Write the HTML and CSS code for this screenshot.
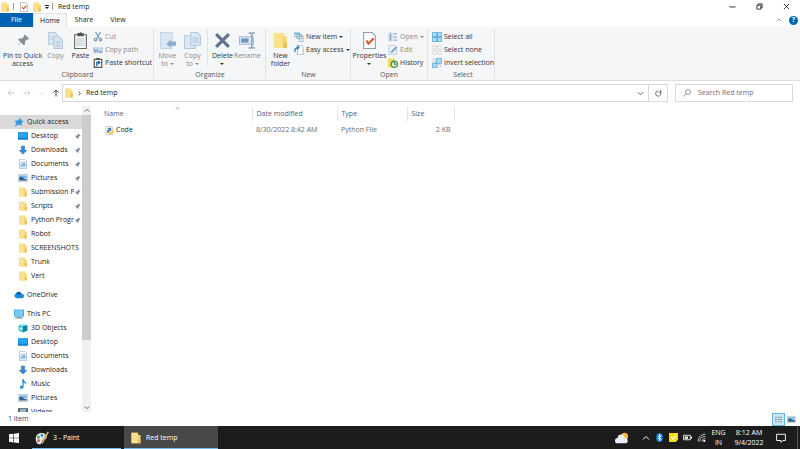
FILE: index.html
```
<!DOCTYPE html>
<html lang="en">
<head>
    <meta charset="UTF-8">
    <meta name="viewport" content="width=device-width, initial-scale=1.0">
    <title>Red temp</title>
    <link rel="stylesheet" href="styles.css">
</head>
<body>
    <!-- shared icons -->
    <svg class="sprite" aria-hidden="true">
        <symbol id="folder" viewBox="0 0 16 16"><path fill="#f3d573" d="M2 1h9v3h3v11H2z"/><path fill="#fbe18f" d="M2 1h8v14H2z"/><path fill="#e8bd50" d="M11 10h3v5h-3z"/></symbol>
        <symbol id="pin" viewBox="0 0 16 16"><path fill="currentColor" d="M10 1l5 5-1 1-1-.5L10 9.500l.5 2.500L9 13.500 6 10.500 1 15l4.500-5-3-3L4 5.500l2.500.5L9.500 3 9 2z"/></symbol>
        <symbol id="star" viewBox="0 0 16 16"><path fill="#3595dc" d="M10 1l1 4.500 4.500.5-3.500 3.500 1 5-4.500-2.500L1 15l3-5-3-4 5-.500z"/></symbol>
        <symbol id="desktop" viewBox="0 0 16 16"><path fill="#0b7fd6" d="M0 2h16v12H0z"/><path fill="#27a4f5" d="M1 3h14v8H1z"/></symbol>
        <symbol id="down" viewBox="0 0 16 16"><path fill="#3b86d0" d="M5 1h6v7h4l-7 7-7-7h4z"/></symbol>
        <symbol id="document" viewBox="0 0 16 16"><path fill="#fff" stroke="#8aa3b5" d="M2.500.5h8l3 3v12h-11z"/><path stroke="#3d94d0" d="M4 5.500h3m1 0h4M4 8.500h8M4 10.500h4m1 0h3M4 12.500h8"/><path fill="#3d94d0" d="M8 7h3v3H8z"/></symbol>
        <symbol id="picture" viewBox="0 0 16 16"><path fill="#f4f8fb" stroke="#9baab5" d="M.5 2.500h15v11H.5z"/><path fill="#6cb5e8" d="M2 4h12v4H2z"/><path fill="#315f86" d="M2 7l4-1 4 3h4v3H2z"/></symbol>
        <symbol id="cloud" viewBox="0 0 16 16"><path fill="#1689dc" d="M4 13a4 4 0 0 1-1-7.500A5 5 0 0 1 12 6a3.500 3.500 0 0 1 1 7z"/><path fill="#075da8" d="M3 6a5 5 0 0 1 9 0l-3 2z"/></symbol>
        <symbol id="pc" viewBox="0 0 16 16"><path fill="#2397df" d="M0 1h16v11H0z"/><path fill="#76ccf7" d="M1 2h14v9H1z"/><path fill="#8094a3" d="M6 12h4v1h4v2H2v-2h4z"/></symbol>
        <symbol id="cube" viewBox="0 0 16 16"><path fill="#8be5f2" d="M1 3l8-2 6 2-7 2z"/><path fill="#2fbed5" d="M1 3l7 2v10l-7-3z"/><path fill="#0786a4" d="M8 5l7-2v9l-7 3z"/><path fill="#d9f8fc" d="M3 7h4v4H3z"/></symbol>
        <symbol id="music" viewBox="0 0 16 16"><path fill="#168fdc" d="M7 0h2c0 4 5 4 4 9-1-2-2-3-4-3v6c0 5-6 4-6 1 0-2 2-3 4-2z"/></symbol>
        <symbol id="video" viewBox="0 0 16 16"><path fill="#444" d="M0 2h16v12H0z"/><path fill="#8fb5c8" d="M3 3h10v10H3z"/><path stroke="#ddd" stroke-dasharray="1 1" d="M1.500 3v10m13-10v10"/></symbol>
        <symbol id="pages" viewBox="0 0 16 16"><g fill="#dce8f4" stroke="#b3c9e0"><path d="M1.500.5h6l2 2v9h-8z"/><path d="M6.500 4.500h5l3 3v8h-8z"/></g><path stroke="#b4cae0" d="M3 4.500h4M3 6.500h3M8 9.500h5m-5 2h5m-5 2h5"/></symbol>
        <symbol id="pages-up" viewBox="0 0 16 16"><g fill="#dce8f4" stroke="#b3c9e0"><path d="M.5 3.500h10v12H.5z"/><path d="M6.500.5h6l3 3v9h-9z"/></g><path stroke="#b4cae0" d="M8 5.500h6m-6 2h6m-6 2h6"/></symbol>
        <symbol id="check" viewBox="0 0 16 16"><path fill="#fff" stroke="#8f9ba5" d="M2.500.5h8l3 3v12h-11z"/><path fill="none" stroke="#d85b32" stroke-width="2" d="M5 8l2 3 5-5"/></symbol>
        <symbol id="chevron-up" viewBox="0 0 16 16"><path fill="none" stroke="currentColor" stroke-width="2" d="M2 11l6-6 6 6"/></symbol>
        <symbol id="chevron-down" viewBox="0 0 16 16"><path fill="none" stroke="currentColor" stroke-width="2" d="M2 5l6 6 6-6"/></symbol>
        <symbol id="details" viewBox="0 0 16 16"><path stroke="#758b99" stroke-width="2" d="M2 4h3m2 0h3m1 0h3M2 8h3m2 0h3m1 0h3M2 12h3m2 0h3m1 0h3"/></symbol>
    </svg>

    <header class="titlebar">
        <svg class="icon"><use href="#folder"/></svg>
        <span class="line"></span>
        <button aria-label="Properties"><svg class="icon"><use href="#check"/></svg></button>
        <button aria-label="New folder"><svg class="icon"><use href="#folder"/></svg></button>
        <button class="customize" aria-label="Customize"><i class="caret"></i></button>
        <span class="line"></span>
        <h1>Red temp</h1>
        <div class="window-buttons">
            <button aria-label="Minimize"><svg viewBox="0 0 16 16"><path stroke="#222" stroke-width="2" d="M1 9h14"/></svg></button>
            <button aria-label="Restore"><svg viewBox="0 0 16 16"><path fill="none" stroke="#222" stroke-width="2" d="M2 5h9v9H2zM5 5V2h9v9h-3"/></svg></button>
            <button aria-label="Close"><svg viewBox="0 0 16 16"><path stroke="#222" stroke-width="2" d="M2 2l12 12M14 2L2 14"/></svg></button>
        </div>
    </header>

    <nav class="tabs">
        <button class="tab file">File</button>
        <button class="tab active">Home</button>
        <button class="tab">Share</button>
        <button class="tab">View</button>
        <div class="help">
            <button aria-label="Collapse ribbon"><svg><use href="#chevron-up"/></svg></button>
            <button class="question" aria-label="Help">?</button>
        </div>
    </nav>

    <div class="ribbon">
        <section class="group clipboard">
            <div class="tools">
                <button class="big wide"><svg class="pin"><use href="#pin"/></svg><span>Pin to Quick<br>access</span></button>
                <button class="big disabled"><svg><use href="#pages"/></svg><span>Copy</span></button>
                <button class="big"><svg viewBox="0 0 16 16"><path fill="#f8fafb" stroke="#6f6256" d="M2.500 2.500h11v13h-11z"/><path fill="#555" d="M5 1h2l1-1 1 1h2v3H5z"/><path stroke="#b5c6d0" d="M4 6.500h8m-8 2h8m-8 2h8m-8 2h8"/></svg><span>Paste</span></button>
                <div class="small-list">
                    <button class="disabled"><svg viewBox="0 0 16 16"><g fill="none" stroke="#7d9cc5" stroke-width="2"><path d="M4 0l6 10M12 0L6 10"/><circle cx="4" cy="12" r="2"/><circle cx="12" cy="12" r="2"/></g></svg>Cut</button>
                    <button class="disabled"><svg viewBox="0 0 16 16"><path fill="#cbdcee" stroke="#a6bdd8" d="M.5 4.500h15v8H.5z"/><path stroke="#6f91bd" stroke-width="2" d="M2 7l2 4m2-4l2 4m2 0h4"/></svg>Copy path</button>
                    <button><svg viewBox="0 0 16 16"><path fill="#fff" stroke="#66584c" stroke-width="2" d="M2 2h12v13H2z"/><path fill="#555" d="M5 0h6v3H5z"/><path fill="none" stroke="#1d67aa" stroke-width="2" d="M6 13V7h5M8 5l3 2-3 3"/></svg>Paste shortcut</button>
                </div>
            </div>
            <h2>Clipboard</h2>
        </section>
        <section class="group organize">
            <div class="tools">
                <button class="big disabled"><svg viewBox="0 0 16 16"><path fill="#dbe6f3" stroke="#c4d4e6" d="M1.500.5h11v15h-11z"/><path fill="#8eabd0" d="M7 11l4-4v2h5v4h-5v2z"/></svg><span>Move<br>to <i class="caret"></i></span></button>
                <button class="big disabled"><svg><use href="#pages-up"/></svg><span>Copy<br>to <i class="caret"></i></span></button>
                <span class="separator"></span>
                <button class="big"><svg viewBox="0 0 16 16"><path stroke="#60748f" stroke-width="3" d="M2 2l12 12M14 2L2 14"/></svg><span>Delete<br><i class="caret"></i></span></button>
                <button class="big disabled"><svg viewBox="0 0 16 16"><path fill="#e3edf7" stroke="#a1b8d2" d="M.5 4.500h13v7H.5z"/><path fill="#6f96c1" d="M2 6h7v4H2z"/><path fill="none" stroke="#8da5bd" stroke-width="1.500" d="M9 1h2l1 1 1-1h2m-3 1v12m-3 1h2l1-1 1 1h2"/></svg><span>Rename</span></button>
            </div>
            <h2>Organize</h2>
        </section>
        <section class="group new">
            <div class="tools">
                <button class="big"><svg><use href="#folder"/></svg><span>New<br>folder</span></button>
                <div class="small-list">
                    <button><svg viewBox="0 0 16 16"><g fill="#eef6fb" stroke="#7197ad"><path d="M.5 1.500h9v6h-9zM4.500 4.500h8v6h-8zM8.500 6.500h6v9h-6z"/></g><path fill="#55a6d8" d="M1 2h8v2H1z"/></svg>New item <i class="caret"></i></button>
                    <button><svg viewBox="0 0 16 16"><path fill="#fff" stroke="#8494a0" d="M5.500.5h6l3 3v12h-9z"/><path fill="none" stroke="#2583c0" stroke-width="2" d="M2 11C0 7 3 4 7 4M5 1l3 3-3 3"/></svg>Easy access <i class="caret"></i></button>
                </div>
            </div>
            <h2>New</h2>
        </section>
        <section class="group open">
            <div class="tools">
                <button class="big"><svg><use href="#check"/></svg><span>Properties<br><i class="caret"></i></span></button>
                <div class="small-list">
                    <button class="disabled"><svg viewBox="0 0 16 16"><path fill="#dce8f4" stroke="#a7bfdb" d="M1.500 1.500h5v13h-5z"/><path stroke="#86a3c8" stroke-width="2" d="M9 3h5m-5 5h5m-5 5h5M4 3v10"/></svg>Open <i class="caret"></i></button>
                    <button class="disabled"><svg viewBox="0 0 16 16"><path fill="#edf4fa" stroke="#9bb8d5" d="M1.500.5h9l3 3v12h-12z"/><path stroke="#75a3cf" stroke-width="3" d="M5 12l9-9"/></svg>Edit</button>
                    <button><svg viewBox="0 0 16 16"><path fill="#f4d95e" d="M0 1h11v14H0z"/><circle cx="10" cy="10" r="5" fill="#e7f4dc" stroke="#3e8d46" stroke-width="2"/><path fill="none" stroke="#315f86" stroke-width="1.500" d="M10 6v4h3"/></svg>History</button>
                </div>
            </div>
            <h2>Open</h2>
        </section>
        <section class="group select">
            <div class="tools">
                <div class="small-list">
                    <button><svg viewBox="0 0 16 16"><g fill="#a9dcf8" stroke="#3095d0"><path d="M.5.5h7v7h-7zM8.500.5h7v7h-7zM.5 8.500h7v7h-7zM8.500 8.500h7v7h-7z"/></g></svg>Select all</button>
                    <button><svg viewBox="0 0 16 16"><g fill="#fff" stroke="#a9afb4" stroke-dasharray="2 1"><path d="M1.500 1.500h5v5h-5zM9.500 1.500h5v5h-5zM1.500 9.500h5v5h-5zM9.500 9.500h5v5h-5z"/></g></svg>Select none</button>
                    <button><svg viewBox="0 0 16 16"><g fill="#a9dcf8" stroke="#3095d0"><path d="M6.500.5h9v8h-9zM.5 8.500h7v7h-7z"/></g><g fill="#fff" stroke="#a9bdc9"><path d="M1.500 1.500h4v5h-4zM9.500 10.500h4v4h-4z"/></g></svg>Invert selection</button>
                </div>
            </div>
            <h2>Select</h2>
        </section>
    </div>

    <div class="address-row">
        <div class="arrows">
            <button class="off" aria-label="Back"><svg viewBox="0 0 16 16"><path fill="none" stroke="currentColor" stroke-width="2" d="M15 8H2m5-5L2 8l5 5"/></svg></button>
            <button class="off" aria-label="Forward"><svg viewBox="0 0 16 16"><path fill="none" stroke="currentColor" stroke-width="2" d="M1 8h13M9 3l5 5-5 5"/></svg></button>
            <button class="off recent" aria-label="Recent locations"><svg><use href="#chevron-down"/></svg></button>
            <button aria-label="Up"><svg viewBox="0 0 16 16"><path fill="none" stroke="currentColor" stroke-width="2" d="M8 15V2M3 7l5-5 5 5"/></svg></button>
        </div>
        <div class="address">
            <svg class="icon"><use href="#folder"/></svg>
            <svg class="crumb" viewBox="0 0 16 16"><path fill="none" stroke="#444" stroke-width="3" d="M5 2l6 6-6 6"/></svg>
            <span class="path">Red temp</span>
            <button aria-label="Previous locations"><svg><use href="#chevron-down"/></svg></button>
            <button class="refresh" aria-label="Refresh"><svg viewBox="0 0 16 16"><path fill="none" stroke="currentColor" stroke-width="2" d="M12 4a6 6 0 1 1-5-2M8 5h5V0"/></svg></button>
        </div>
        <label class="search">
            <svg viewBox="0 0 16 16"><g fill="none" stroke="#777" stroke-width="1.500"><circle cx="10" cy="6" r="5"/><path d="M6 10l-5 5"/></g></svg>
            <input type="text" placeholder="Search Red temp" aria-label="Search Red temp">
        </label>
    </div>

    <main>
        <aside>
            <ul class="tree">
                <li class="root current"><svg><use href="#star"/></svg><span>Quick access</span></li>
                <li><svg><use href="#desktop"/></svg><span>Desktop</span><svg class="pinned"><use href="#pin"/></svg></li>
                <li><svg><use href="#down"/></svg><span>Downloads</span><svg class="pinned"><use href="#pin"/></svg></li>
                <li><svg><use href="#document"/></svg><span>Documents</span><svg class="pinned"><use href="#pin"/></svg></li>
                <li><svg><use href="#picture"/></svg><span>Pictures</span><svg class="pinned"><use href="#pin"/></svg></li>
                <li><svg><use href="#folder"/></svg><span>Submission P</span><svg class="pinned"><use href="#pin"/></svg></li>
                <li><svg><use href="#folder"/></svg><span>Scripts</span><svg class="pinned"><use href="#pin"/></svg></li>
                <li><svg><use href="#folder"/></svg><span>Python Progr</span><svg class="pinned"><use href="#pin"/></svg></li>
                <li><svg><use href="#folder"/></svg><span>Robot</span></li>
                <li><svg><use href="#folder"/></svg><span>SCREENSHOTS</span></li>
                <li><svg><use href="#folder"/></svg><span>Trunk</span></li>
                <li><svg><use href="#folder"/></svg><span>Vert</span></li>
                <li class="root spaced"><svg><use href="#cloud"/></svg><span>OneDrive</span></li>
                <li class="root spaced"><svg><use href="#pc"/></svg><span>This PC</span></li>
                <li><svg><use href="#cube"/></svg><span>3D Objects</span></li>
                <li><svg><use href="#desktop"/></svg><span>Desktop</span></li>
                <li><svg><use href="#document"/></svg><span>Documents</span></li>
                <li><svg><use href="#down"/></svg><span>Downloads</span></li>
                <li><svg><use href="#music"/></svg><span>Music</span></li>
                <li><svg><use href="#picture"/></svg><span>Pictures</span></li>
                <li><svg><use href="#video"/></svg><span>Videos</span></li>
            </ul>
            <div class="scrollbar">
                <svg><use href="#chevron-up"/></svg>
                <div class="track"><div class="thumb"></div></div>
                <svg><use href="#chevron-down"/></svg>
            </div>
        </aside>
        <div class="files">
            <table>
                <thead>
                    <tr>
                        <th class="name">Name<svg class="sort"><use href="#chevron-up"/></svg></th>
                        <th class="date">Date modified</th>
                        <th class="type">Type</th>
                        <th class="size">Size</th>
                    </tr>
                </thead>
                <tbody>
                    <tr>
                        <td class="name"><svg viewBox="0 0 16 16"><path fill="#fff" stroke="#9aa4ab" d="M1.500.5h9l3 3v12h-12z"/><path fill="#3979ad" d="M5 3h6v6H7v3H4V7h4V6H5z"/><path fill="#f0ce3e" d="M12 7h3v6h-4v2H7v-5h5z"/></svg>Code</td>
                        <td>8/30/2022 8:42 AM</td>
                        <td>Python File</td>
                        <td class="size">2 KB</td>
                    </tr>
                </tbody>
            </table>
        </div>
    </main>

    <div class="statusbar">
        <span>1 item</span>
        <div class="views">
            <button class="selected" aria-label="Details"><svg><use href="#details"/></svg></button>
            <button aria-label="Large icons"><svg><use href="#picture"/></svg></button>
        </div>
    </div>

    <footer class="taskbar">
        <button class="start" aria-label="Start"><svg viewBox="0 0 16 16"><path fill="#fff" d="M0 2l7-1v6.500H0zM8 1l8-1v7.500H8zM0 8.500h7V15l-7-1zM8 8.500h8V16l-8-1z"/></svg></button>
        <button class="task paint"><svg viewBox="0 0 16 16"><path fill="#dbe9f1" d="M1 7c1-5 8-6 11-3s1 6-2 6-1 4-4 5-6-3-5-8z"/><circle cx="4" cy="7" r="1.500" fill="#42a04c"/><circle cx="8" cy="5" r="1.500" fill="#2a82cf"/><circle cx="4" cy="11" r="1.500" fill="#d94a38"/><path stroke="#dca145" stroke-width="2" d="M15 1L8 14"/></svg>3 - Paint</button>
        <button class="task current"><svg><use href="#folder"/></svg>Red temp</button>
        <div class="tray">
            <svg class="weather" viewBox="0 0 16 16"><circle cx="11" cy="6" r="4" fill="#f6b43b"/><path fill="#e7eef7" d="M3 14a3 3 0 0 1 0-6 4 4 0 0 1 8 0 3 3 0 0 1 1 6z"/></svg>
            <svg class="expand"><use href="#chevron-up"/></svg>
            <svg viewBox="0 0 16 16"><ellipse cx="8" cy="8" rx="6" ry="8" fill="#0b80da"/><path fill="none" stroke="#fff" stroke-width="1.500" d="M5 5l6 6-3 3V2l3 3-6 6"/></svg>
            <svg class="note" viewBox="0 0 16 16"><path fill="#f5dc18" d="M0 0h16v12l-4 4H0z"/><path fill="none" stroke="#fff" stroke-width="2" d="M4 7l3 4 6-7"/></svg>
            <svg viewBox="0 0 16 16"><path fill="none" stroke="#fff" stroke-width="1.500" d="M1 4h12v8H1z"/><path fill="#fff" d="M3 6h6v4H3zM14 6h2v4h-2z"/></svg>
            <svg viewBox="0 0 16 16"><g fill="none" stroke="#ddd" stroke-width="1.500"><path d="M2 15C2 7 8 2 15 2M5 15c0-6 4-9 10-9M9 15c0-3 2-5 6-5"/></g><circle cx="13" cy="14" r="2" fill="#fff"/></svg>
            <div class="lang">ENG<br>IN</div>
            <div class="clock">8:12 AM<br>9/4/2022</div>
            <svg class="notify" viewBox="0 0 16 16"><path fill="none" stroke="#fff" stroke-width="1.500" d="M1 2h14v10h-4l-3 3v-3H1z"/></svg>
            <span class="show-desktop"></span>
        </div>
    </footer>
</body>
</html>
```

FILE: styles.css
```
* {
    box-sizing: border-box;
}
body {
    margin: 0;
    height: 100vh;
    display: flex;
    flex-direction: column;
    overflow: hidden;
    background: #fff;
    color: #222;
    font-family: 'Open Sans', 'Noto Sans', sans-serif;
    font-size: 7px;
    line-height: 8px;
}
button, input {
    margin: 0;
    padding: 0;
    border: none;
    background: none;
    color: inherit;
    font: inherit;
}
button {
    white-space: nowrap;
}
h1, h2 {
    margin: 0;
    font-size: 7px;
    font-weight: normal;
}
svg {
    width: 10px;
    height: 10px;
    flex: none;
    display: block;
}
.sprite {
    position: absolute;
    width: 0;
    height: 0;
}
.caret {
    display: inline-block;
    border: 2px solid transparent;
    border-top-color: currentColor;
    border-bottom: none;
    vertical-align: middle;
}

/* title bar */
.titlebar {
    display: flex;
    align-items: center;
    height: 13px;
    flex: none;
}
.titlebar .line {
    width: 1px;
    height: 7px;
    margin: 0 5px 0 3px;
    background: #999;
}
.titlebar button + button {
    margin-left: 3px;
}
.titlebar .customize {
    display: flex;
    flex-direction: column;
    align-items: center;
    gap: 1px;
}
.customize::before {
    content: "";
    width: 4px;
    height: 1px;
    background: #222;
}
.window-buttons {
    display: flex;
    margin-left: auto;
}
.titlebar .window-buttons button {
    width: 27px;
    margin: 0;
    display: flex;
    justify-content: center;
}
.window-buttons svg {
    width: 7px;
    height: 7px;
}

/* tabs */
.tabs {
    display: flex;
    height: 14px;
    flex: none;
}
.tab {
    width: 34px;
    height: 14px;
}
.tab.file {
    width: 33px;
    background: #0063b1;
    color: #fff;
}
.tab.active {
    background: #f5f6f7;
    border: 1px solid #e3e4e5;
    border-bottom: none;
}
.help {
    display: flex;
    align-items: center;
    gap: 7px;
    margin-left: auto;
    padding-right: 2px;
    color: #777;
}
.help svg {
    width: 6px;
    height: 6px;
}
.question {
    width: 9px;
    height: 9px;
    border-radius: 50%;
    background: #0063b1;
    color: #fff;
    font-weight: bold;
}

/* ribbon */
.ribbon {
    display: flex;
    flex: none;
    height: 54px;
    padding: 3px 0 1px;
    background: #f5f6f7;
    border-bottom: 1px solid #dedfe0;
    color: #333;
}
.group {
    display: flex;
    flex-direction: column;
    justify-content: space-between;
    border-right: 1px solid #e1e2e3;
}
.group h2 {
    text-align: center;
    color: #555;
}
.tools {
    display: flex;
}
.clipboard {
    width: 154px;
    padding-left: 2px;
}
.organize {
    width: 112px;
    padding-left: 1px;
}
.new {
    width: 85px;
    padding-left: 1px;
}
.open {
    width: 77px;
}
.select {
    width: 67px;
    padding-left: 4px;
}
.big {
    width: 25px;
    height: 40px;
    padding-top: 2px;
    display: flex;
    flex-direction: column;
    align-items: center;
}
.big svg {
    width: 17px;
    height: 17px;
    margin-bottom: 3px;
}
.big.wide {
    width: 41px;
}
.big svg.pin {
    width: 14px;
    color: #858d97;
}
.big.disabled,
.small-list .disabled {
    color: #8b8b8b;
}
.separator {
    width: 1px;
    height: 36px;
    margin: 0 2px;
    background: #e1e2e3;
}
.small-list {
    display: flex;
    flex-direction: column;
}
.small-list button {
    display: flex;
    align-items: center;
    gap: 2px;
    height: 13px;
}
.small-list svg {
    width: 10px;
    height: 10px;
}
.new .big {
    width: 27px;
}
.open .big {
    width: 37px;
}

/* address row */
.address-row {
    display: flex;
    align-items: center;
    flex: none;
    height: 24px;
    padding-right: 7px;
}
.arrows {
    display: flex;
    align-items: center;
    gap: 8px;
    padding: 0 2px 0 7px;
    color: #444;
}
.arrows svg {
    width: 8px;
    height: 8px;
}
.arrows .off {
    color: #ccc;
}
.arrows .recent svg {
    width: 5px;
    height: 5px;
}
.address {
    flex: 1;
    display: flex;
    align-items: center;
    height: 18px;
    margin-right: 7px;
    padding-left: 1px;
    border: 1px solid #d9d9d9;
}
.address .crumb {
    width: 5px;
    height: 5px;
    margin: 0 4px 0 3px;
}
.path {
    flex: 1;
}
.address button {
    display: flex;
    align-items: center;
    justify-content: center;
    width: 16px;
    height: 16px;
    color: #555;
}
.address button svg {
    width: 7px;
    height: 7px;
}
.address .refresh {
    width: 19px;
    border-left: 1px solid #d9d9d9;
}
.search {
    display: flex;
    align-items: center;
    gap: 7px;
    width: 118px;
    height: 18px;
    padding-left: 7px;
    border: 1px solid #d9d9d9;
}
.search svg {
    width: 8px;
    height: 8px;
}
.search input {
    flex: 1;
    min-width: 0;
    outline: none;
}
.search input::placeholder {
    color: #707070;
}

/* content */
main {
    flex: 1;
    min-height: 0;
    display: flex;
    padding-top: 1px;
}
aside {
    display: flex;
    width: 91px;
    flex: none;
    overflow: hidden;
}
.tree {
    flex: 1;
    min-width: 0;
    margin: 0;
    padding: 9px 0 0;
    list-style: none;
}
.tree li {
    display: flex;
    align-items: center;
    gap: 3px;
    height: 14px;
    padding-left: 18px;
}
.tree .root {
    padding-left: 14px;
}
.tree .current {
    background: #d9d9d9;
}
.tree .spaced {
    margin-top: 5px;
}
.tree span {
    flex: 1;
    min-width: 0;
    overflow: hidden;
    white-space: nowrap;
}
.tree .pinned {
    width: 7px;
    height: 7px;
    margin: 0 1px 0 -3px;
    color: #7b8a98;
}
.scrollbar {
    display: flex;
    flex-direction: column;
    align-items: center;
    width: 9px;
    background: #f0f0f0;
    color: #444;
}
.scrollbar svg {
    width: 6px;
    height: 9px;
}
.track {
    flex: 1;
    width: 100%;
}
.thumb {
    height: 78%;
    background: #cdcdcd;
}
.files {
    flex: 1;
    padding-left: 7px;
}
table {
    width: 357px;
    table-layout: fixed;
    border-collapse: collapse;
    color: #6d6d6d;
}
th, td {
    height: 18px;
    padding: 0 0 0 4px;
    text-align: left;
    font-weight: normal;
}
th {
    position: relative;
    height: 15px;
    border-right: 1px solid #e5e5e5;
    color: #4c607a;
}
th.name {
    width: 154px;
    padding-left: 6px;
}
th.date {
    width: 85px;
}
th.type {
    width: 70px;
}
.sort {
    position: absolute;
    top: 0;
    left: 50%;
    width: 5px;
    height: 5px;
    color: #777;
}
td.name {
    display: flex;
    align-items: center;
    gap: 2px;
    padding-left: 7px;
    color: #222;
}
td.name svg {
    width: 9px;
    height: 9px;
}
td.size {
    padding-right: 4px;
    text-align: right;
}

/* status bar */
.statusbar {
    display: flex;
    align-items: center;
    justify-content: space-between;
    flex: none;
    height: 14px;
    padding: 0 2px 0 8px;
    color: #33485f;
}
.views {
    display: flex;
}
.views button {
    display: flex;
    align-items: center;
    justify-content: center;
    width: 13px;
    height: 13px;
}
.views .selected {
    background: #cce8f5;
    border: 1px solid #61b5d8;
}
.views svg {
    width: 9px;
    height: 9px;
}

/* taskbar */
.taskbar {
    display: flex;
    flex: none;
    height: 23px;
    background: #1c1c1c;
    color: #fff;
}
.start {
    display: flex;
    align-items: center;
    justify-content: center;
    width: 28px;
}
.task {
    display: flex;
    align-items: center;
    width: 94px;
    gap: 4px;
    padding: 1px 0 0 6px;
    border-bottom: 1px solid #76b9ed;
}
.task svg {
    width: 12px;
    height: 12px;
}
.task.paint {
    width: 89px;
    margin: 0 3px 0 4px;
    padding-left: 3px;
}
.task.paint svg {
    width: 14px;
    height: 14px;
}
.task.current {
    background: #484848;
}
.tray {
    display: flex;
    align-items: center;
    gap: 5px;
    margin-left: auto;
    text-align: center;
}
.tray svg {
    width: 9px;
    height: 9px;
}
.tray .weather {
    width: 14px;
    height: 14px;
    margin-right: 8px;
}
.tray .expand {
    width: 8px;
    height: 8px;
}
.lang, .clock {
    line-height: 10px;
}
.lang {
    width: 15px;
}
.clock {
    width: 36px;
}
.tray .notify {
    width: 10px;
    height: 10px;
    margin: 0 6px 0 4px;
}
.show-desktop {
    width: 3px;
    height: 23px;
    border-left: 1px solid #555;
}
```
